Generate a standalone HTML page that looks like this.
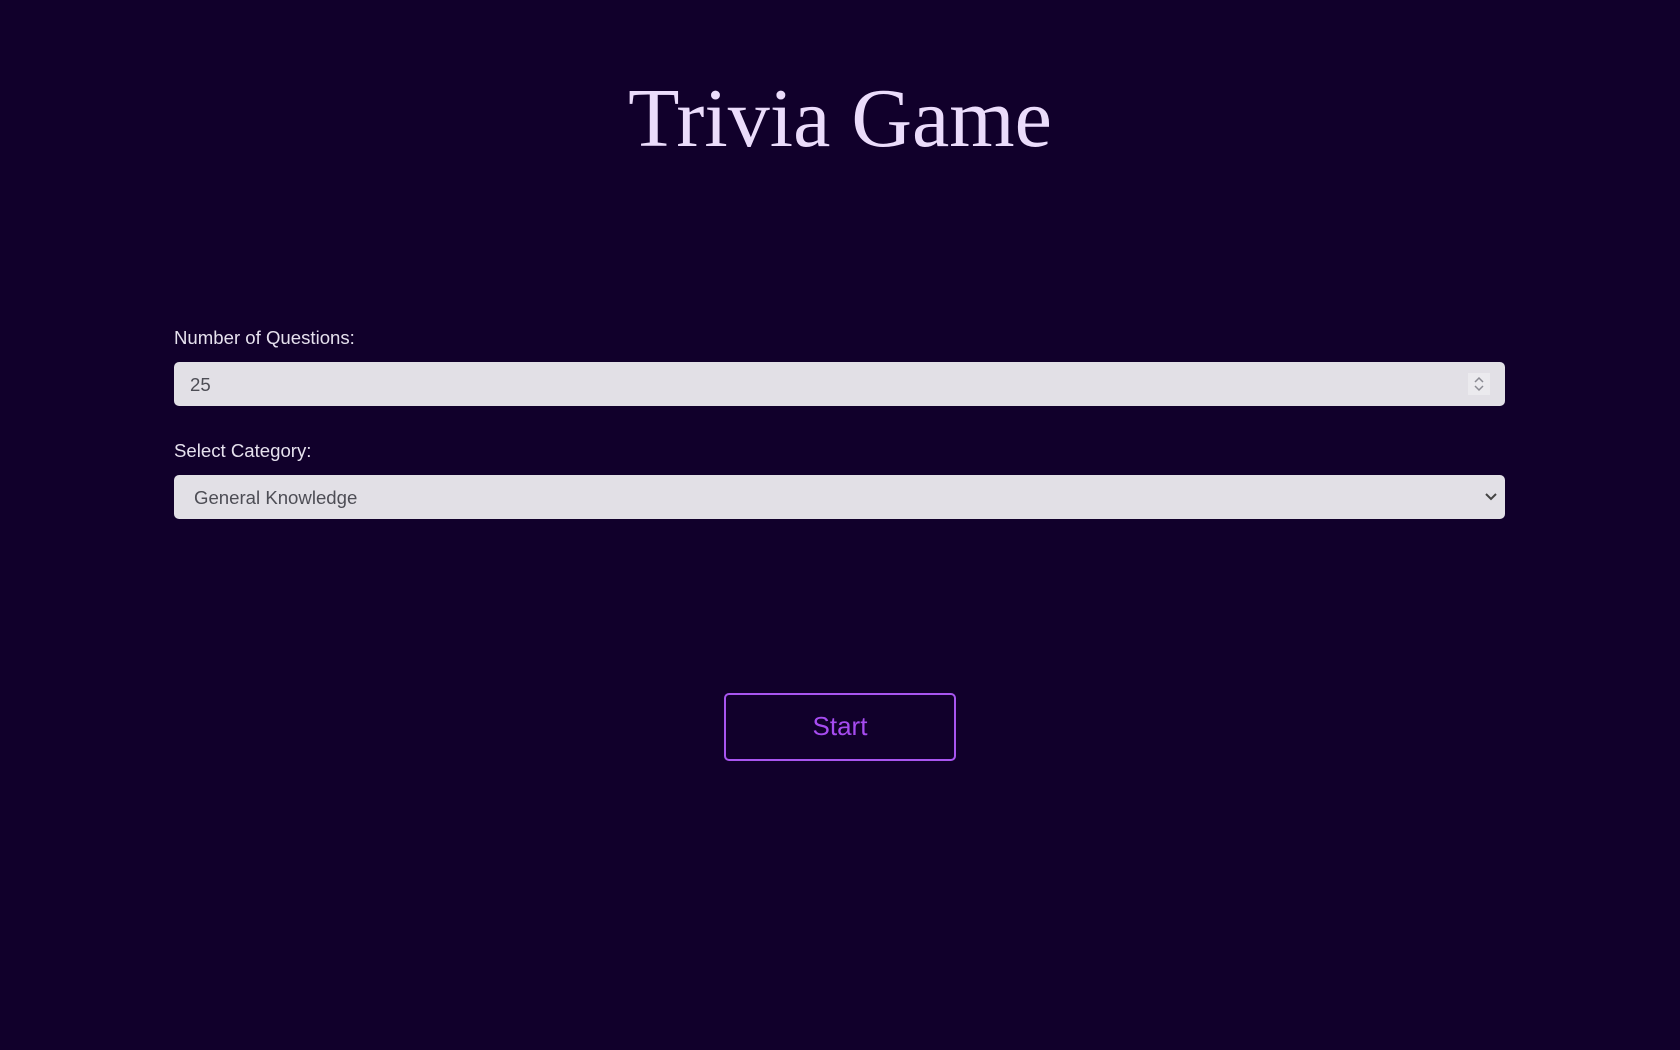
<!DOCTYPE html>
<html><head><meta charset="utf-8"><style>
html,body{margin:0;padding:0;}
body{width:1680px;height:1050px;background:#11002b;font-family:"Liberation Sans",sans-serif;position:relative;overflow:hidden;}
h1{position:absolute;left:0;right:0;top:69px;margin:0;text-align:center;font-family:"Liberation Serif",serif;font-weight:normal;font-size:84px;line-height:100px;color:#ebdcfb;}
.lbl{position:absolute;left:174px;font-size:18.6px;color:#e6e1ee;line-height:22px;}
.box{position:absolute;left:174px;width:1331px;height:44px;background:#e2e0e6;border-radius:5px;color:#4d4d55;font-size:18.6px;line-height:46px;box-sizing:border-box;}
.btn{position:absolute;left:724px;top:693px;width:232px;height:68px;box-sizing:border-box;border:2px solid #a855f0;border-radius:5px;text-align:center;line-height:62px;color:#a64bf0;font-size:26px;}
</style></head><body>
<h1>Trivia Game</h1>
<div class="lbl" style="top:327px">Number of Questions:</div>
<div class="box" style="top:362px;padding-left:16px">25
<svg style="position:absolute;right:15px;top:11px" width="22" height="22" viewBox="0 0 22 22"><rect width="22" height="22" fill="#ebeaee"/><path d="M7 9l4-4 4 4M7 13l4 4 4-4" fill="none" stroke="#8a8a92" stroke-width="1.5"/></svg></div>
<div class="lbl" style="top:440px">Select Category:</div>
<div class="box" style="top:475px;padding-left:20px">General Knowledge
<svg style="position:absolute;right:8px;top:17px" width="12" height="10" viewBox="0 0 12 10"><path d="M1 2l5 5 5-5" fill="none" stroke="#444" stroke-width="2"/></svg></div>
<div class="btn">Start</div>
</body></html>
